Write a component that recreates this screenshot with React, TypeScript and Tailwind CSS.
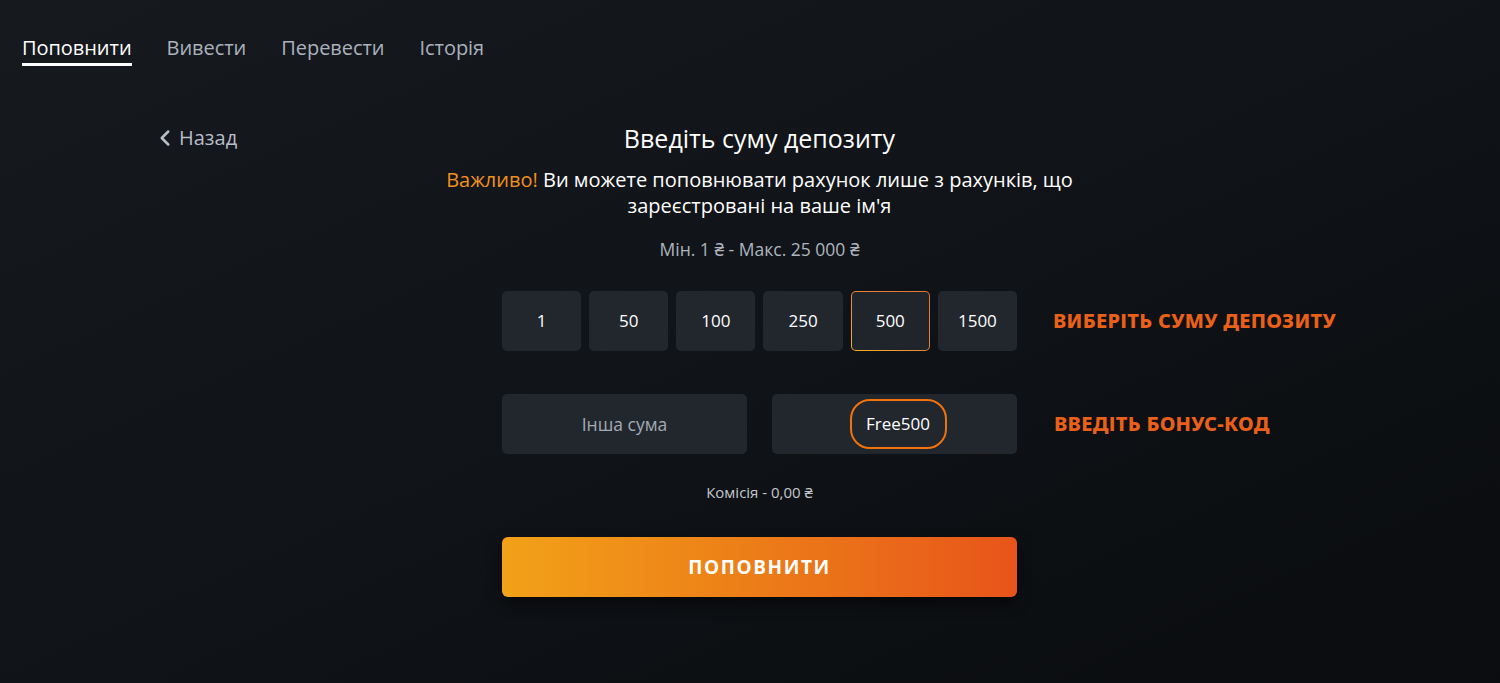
import React, { useState } from 'react';
import { ChevronLeft } from 'lucide-react';

const tabs = ['Поповнити', 'Вивести', 'Перевести', 'Історія'];
const amounts = [1, 50, 100, 250, 500, 1500];

const font = { fontFamily: '"Open Sans", "Noto Sans", sans-serif' };
const labelFont = { fontFamily: '"Noto Sans", "Open Sans", sans-serif' };

const App: React.FC = () => {
  const [tab] = useState(0);
  const [selected, setSelected] = useState(500);

  return (
    <div
      className="min-h-[683px] w-full bg-gradient-to-br from-[#16191e] via-[#101317] to-[#0a0c0f] text-white"
      style={font}
    >
      {/* Tabs */}
      <nav className="flex items-end gap-[35px] px-[22px] pt-[35px]">
        {tabs.map((t, i) => (
          <button
            key={t}
            className={`pb-[2px] text-[20px] leading-[26px] tracking-[-0.05px] border-b-[3px] ${
              i === tab ? 'text-white border-white' : 'text-[#aab2bd] border-transparent'
            }`}
          >
            {t}
          </button>
        ))}
      </nav>

      {/* Header */}
      <div className="grid grid-cols-[1fr_660px_1fr] pl-[19px] pt-[57px]">
        <div className="pl-[133px] pt-[2px]">
          <button className="flex items-center gap-[1px] text-[20px] leading-[26px] text-[#b6bec8]">
            <ChevronLeft size={26} strokeWidth={2.3} className="text-[#b6bec8]" />
            Назад
          </button>
        </div>
        <div className="flex flex-col items-center text-center">
          <h1 className="text-[25px] leading-[30px] text-white">Введіть суму депозиту</h1>
          <p className="mt-[14px] text-[20px] leading-[26px] text-white">
            <span className="text-[#f0901e]">Важливо!</span> Ви можете поповнювати рахунок лише з рахунків, що
            зареєстровані на ваше ім'я
          </p>
          <p className="mt-[19px] text-[17.5px] leading-[22px] text-[#aeb5bf]">Мін. 1 ₴ - Макс. 25 000 ₴</p>
        </div>
        <div />
      </div>

      {/* Amounts */}
      <div className="grid grid-cols-[1fr_515px_1fr] pl-[19px] pt-[31px]">
        <div />
        <div className="grid grid-cols-6 gap-[8px]">
          {amounts.map((a) =>
            a === selected ? (
              <div
                key={a}
                className="h-[60px] rounded-[5px] bg-gradient-to-tr from-[#f5b30e] via-[#e8843a] to-[#e8742e] p-px"
              >
                <button className="flex h-full w-full items-center justify-center rounded-[4px] bg-[#20252c] text-[17px] text-white">
                  {a}
                </button>
              </div>
            ) : (
              <button
                key={a}
                onClick={() => setSelected(a)}
                className="flex h-[60px] items-center justify-center rounded-[5px] bg-[#22272e] text-[17px] text-white"
              >
                {a}
              </button>
            )
          )}
        </div>
        <div className="flex items-center pl-[36px]">
          <span className="text-[20px] font-extrabold uppercase tracking-[0.3px] text-[#e9601a]" style={labelFont}>
            Виберіть суму депозиту
          </span>
        </div>
      </div>

      {/* Other sum + bonus */}
      <div className="grid grid-cols-[1fr_515px_1fr] pl-[19px] pt-[43px]">
        <div />
        <div className="grid grid-cols-2 gap-[25px]">
          <input
            placeholder="Інша сума"
            className="h-[60px] rounded-[5px] bg-[#22272e] text-center text-[17.5px] text-white outline-none placeholder:text-[#a2abb6]"
          />
          <div className="flex h-[60px] items-center justify-center rounded-[5px] bg-[#22272e]">
            <div className="ml-[7px] flex h-[50px] w-[97px] items-center justify-center rounded-[20px] border-2 border-[#f2720c] text-[17px] text-white">
              Free500
            </div>
          </div>
        </div>
        <div className="flex items-center pl-[37px]">
          <span className="text-[20px] font-extrabold uppercase tracking-[0.3px] text-[#e9601a]" style={labelFont}>
            Введіть бонус-код
          </span>
        </div>
      </div>

      {/* Commission */}
      <div className="pl-[19px] pt-[28px] text-center text-[15px] leading-[20px] text-[#c2c8cf]">Комісія - 0,00 ₴</div>

      {/* Submit */}
      <div className="grid grid-cols-[1fr_515px_1fr] pl-[19px] pt-[35px]">
        <div />
        <button className="h-[60px] rounded-[6px] bg-gradient-to-r from-[#f2a118] via-[#ec7c18] to-[#e8541a] text-[19px] font-bold uppercase tracking-[1.6px] text-white shadow-[0_6px_14px_rgba(0,0,0,0.55)]">
          Поповнити
        </button>
        <div />
      </div>
    </div>
  );
};

export default App;
